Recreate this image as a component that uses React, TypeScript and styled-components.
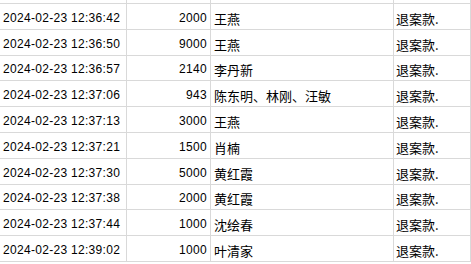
import React from "react";
import styled, { createGlobalStyle } from "styled-components";

const Global = createGlobalStyle`
  html, body { margin: 0; padding: 0; background: #ffffff; }
  body { font-family: "Liberation Sans", Arial, sans-serif; }
`;

const GRID = "#d9d9d9";

const Sheet = styled.div`
  width: 471px;
  height: 264px;
  overflow: hidden;
  background: #ffffff;
  display: flex;
  flex-direction: column;
`;

const Row = styled.div<{ $h: number }>`
  flex: none;
  display: grid;
  grid-template-columns: 127px 84px 183px 1fr;
  height: ${(p) => p.$h}px;
  box-sizing: border-box;
  border-bottom: 1px solid ${GRID};
`;

const Cell = styled.div<{ $align?: "left" | "right"; $cjk?: boolean }>`
  box-sizing: border-box;
  border-right: 1px solid ${GRID};
  display: flex;
  align-items: flex-end;
  justify-content: ${(p) => (p.$align === "right" ? "flex-end" : "flex-start")};
  padding: 0 3px 4px 3px;
  overflow: hidden;
  white-space: nowrap;
  color: #000000;
  font-family: ${(p) =>
    p.$cjk
      ? `"Noto Sans CJK SC", "Liberation Sans", sans-serif`
      : `"Liberation Sans", Arial, sans-serif`};
  font-size: ${(p) => (p.$cjk ? 13 : 12)}px;
  letter-spacing: ${(p) => (p.$cjk ? 0 : 0.3)}px;
  line-height: ${(p) => (p.$cjk ? 15 : 14)}px;
`;

const NameCell = styled(Cell)`
  padding-left: 3px;
  padding-bottom: 3px;
`;

const NoteCell = styled(Cell)`
  padding-left: 2px;
  padding-bottom: 3px;
`;

const rows = [
  ["2024-02-23 12:36:42", "2000", "王燕"],
  ["2024-02-23 12:36:50", "9000", "王燕"],
  ["2024-02-23 12:36:57", "2140", "李丹新"],
  ["2024-02-23 12:37:06", "943", "陈东明、林刚、汪敏"],
  ["2024-02-23 12:37:13", "3000", "王燕"],
  ["2024-02-23 12:37:21", "1500", "肖楠"],
  ["2024-02-23 12:37:30", "5000", "黄红霞"],
  ["2024-02-23 12:37:38", "2000", "黄红霞"],
  ["2024-02-23 12:37:44", "1000", "沈绘春"],
  ["2024-02-23 12:39:02", "1000", "叶清家"],
];

export default function App() {
  return (
    <>
      <Global />
      <Sheet>
        <Row $h={4}>
          <Cell />
          <Cell />
          <Cell />
          <Cell />
        </Row>
        {rows.map(([time, amount, name], i) => (
          <Row key={i} $h={25.8}>
            <Cell>{time}</Cell>
            <Cell $align="right">{amount}</Cell>
            <NameCell $cjk>{name}</NameCell>
            <NoteCell $cjk>退案款.</NoteCell>
          </Row>
        ))}
      </Sheet>
    </>
  );
}
